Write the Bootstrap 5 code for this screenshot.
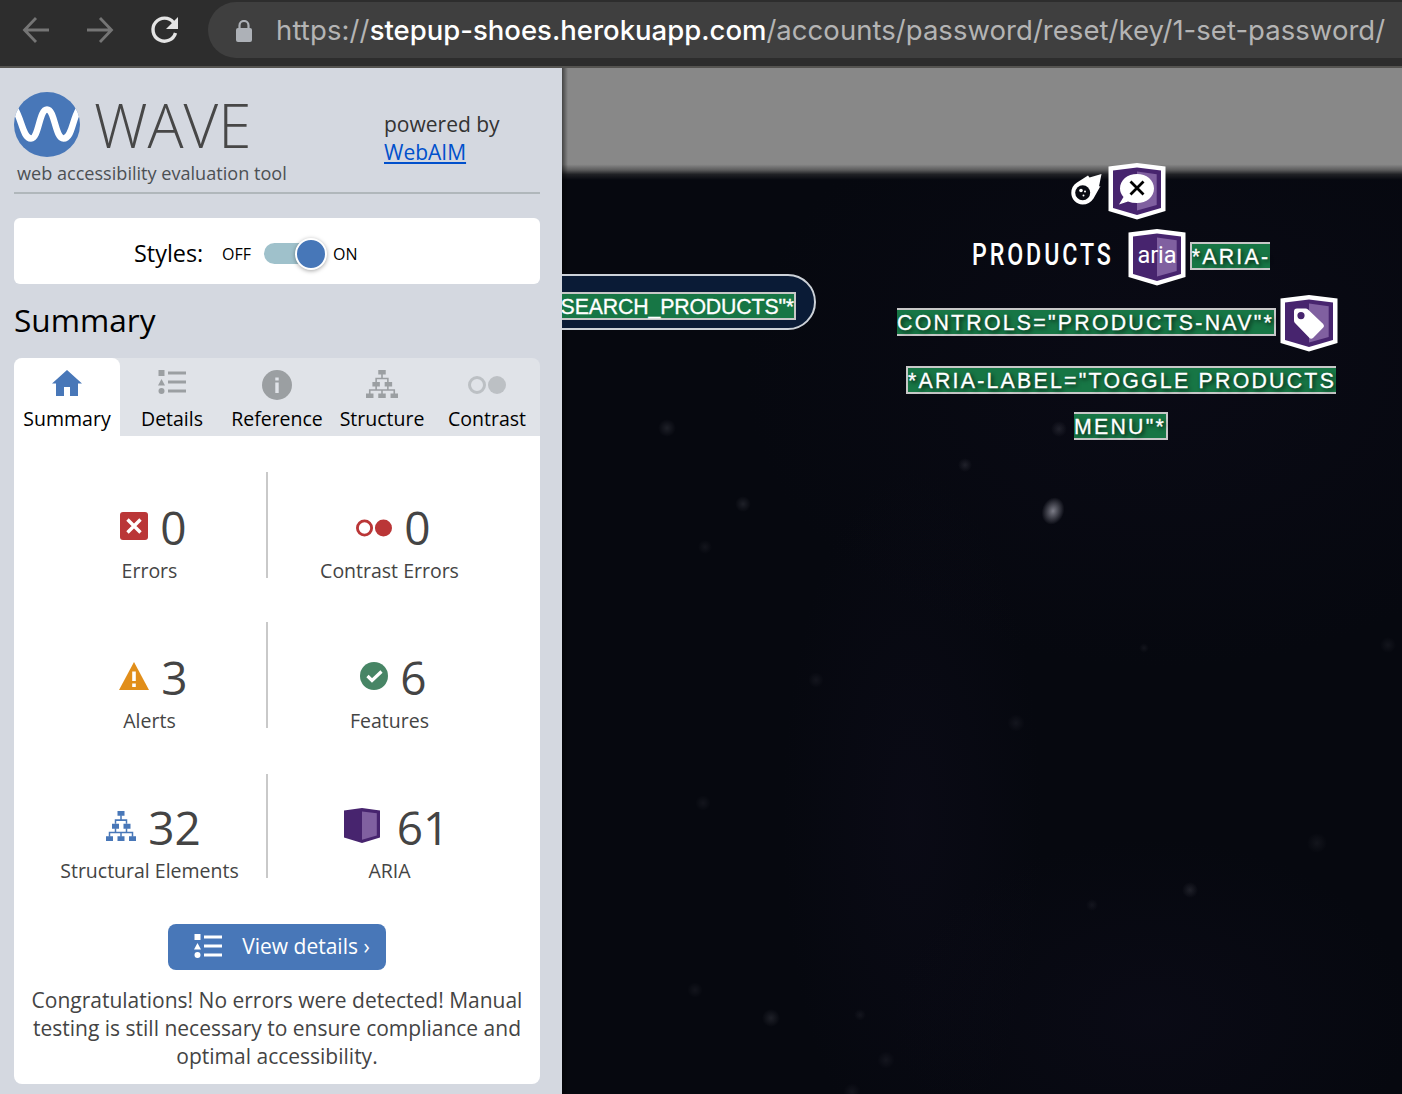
<!DOCTYPE html>
<html lang="en">
<head>
<meta charset="utf-8">
<meta name="viewport" content="width=device-width, initial-scale=1">
<title>WAVE report - StepUp Shoes</title>
<link rel="stylesheet" href="https://cdn.jsdelivr.net/npm/bootstrap@5.3.0/dist/css/bootstrap.min.css">
<style>
body{width:1402px;height:1094px;overflow:hidden;font-family:"Open Sans","Noto Sans",sans-serif;background:#05070f;color:#000}
svg{display:block;flex:none}
.browser-bar{height:68px;background:#2d2d2d;border-bottom:2px solid #555451;padding-top:2px}
.nav-icons{width:208px;padding-left:21px}
.address{height:56px;background:#3f3f3f;border-radius:28px 0 0 28px;padding:1px 0 0 27px;font-family:Inter,Roboto,sans-serif;font-size:27.5px;color:#b4b4b4;white-space:nowrap}
.address .lock{margin-right:23px}
.address .scheme{letter-spacing:.12px}
.address .domain{color:#fff;font-weight:500}
.address .route{letter-spacing:.04px}
.wave-side{width:562px;height:1026px;background:#d4d8e0;padding:0 22px 0 14px;position:relative;z-index:2}
.brand{height:126px;border-bottom:2px solid #b0b7bb}
.brand-word{font-size:60px;font-weight:300;line-height:60px;color:#474747;margin-left:14px;padding-top:1px}
.brand-sub{font-size:18.1px;line-height:24px;color:#4c5054;white-space:nowrap;margin-top:4px;padding-left:3px}
.powered{width:156px;font-size:21px;line-height:28px;color:#333;padding-top:42px}
.powered a{color:#0050cc}
.styles-box{height:66px;margin-top:24px;padding-top:5px;border-radius:6px;background:#fff}
.styles-label{font-size:23.4px;margin-left:120px;width:88px}
.styles-box .opt{font-size:16px}
.opt-off{width:42px}
.opt-on{margin-left:11px}
.knob-track{width:58px;height:21px;border-radius:11px;background:#9fc1cb}
.knob{width:32px;height:32px;border-radius:50%;background:#4777b8;border:2px solid #fff;box-shadow:0 1px 4px rgba(0,0,0,.35);margin-right:-5px}
.side-title{font-size:31.6px;line-height:40px;height:74px;padding:16px 0 0;margin:0;font-weight:400}
.wave-tabs{height:78px;background:#e0e3e8;border-radius:8px 8px 0 0}
.wave-tabs .tab-item{width:105px;font-size:19.5px;border-radius:8px 8px 0 0;padding-top:12px;padding-right:1px;color:#000;text-decoration:none}
.wave-tabs .tab-item.current{background:#fff;width:106px;padding-right:0}
.tab-pic{height:33px}
.tab-pic.low{padding-top:6px}
.tab-item span{line-height:32px}
.panel{height:648px;background:#fff;border-radius:0 0 8px 8px;padding-top:36px;color:#444}
.stat-row{height:106px;margin:0 30px 44px 18px}
.stat-cell{width:234px;padding-left:1px}
.stat-cell.end{width:242px}
.rule{width:2px;background:#c9c9c9}
.rule.short{margin-top:2px}
.figure-line{height:52px;margin:28px 0 4px 8px;gap:12px}
.figure-line b{font-weight:400;font-size:46px;line-height:52px;padding-top:1px}
.aria-figure{gap:17px;margin-left:14px}
.stat-cell small{font-size:19.5px;line-height:30px;color:#444}
.btn-view{width:218px;height:46px;border-radius:8px;background:#4877b8;color:#fff;font-size:21px;padding:0 0 1px;margin:2px auto 0}
.view-text{margin-left:20px;margin-right:-10px}
.verdict{font-size:21px;line-height:28px;margin:16px 10px 0;text-align:center;color:#444}
.site{height:1026px;position:relative;background:#06080f}
.sky{position:absolute;inset:0}
.site-body{position:relative}
.search-pill{width:282px;height:56px;margin:206px 0 0 -28px;border:2px solid #ccd1d8;border-radius:28px;background:#0a1b36;padding:8px 18px 0 0}
.attr{height:28px;border:2px solid #c8c8c8;background:#177645;color:#fff;font-family:"Liberation Sans",Arial,sans-serif;font-size:21.3px;line-height:27px;letter-spacing:-.15px;white-space:nowrap;-webkit-text-stroke:.3px #fff}
.site-nav{width:482px;margin-left:64px;padding-top:95px}
.site-nav .attr{letter-spacing:2.25px;text-shadow:2px 2px 4px rgba(0,0,0,.8)}
.attr.open-r{border-right:0}.attr.open-l{border-left:0}
.nav-word{font-family:Roboto,sans-serif;font-weight:500;font-size:32px;line-height:38px;color:#fff;letter-spacing:4px;width:156px;margin-bottom:7px}
.nav-word span{display:inline-block;transform:scaleX(.725);transform-origin:0 50%;white-space:nowrap}
.line-b,.line-c{margin-top:9px}
.line-c{margin-right:7px}
.line-b .attr,.line-c .attr{margin-bottom:3px}
.comet{margin:-4px 6px 0 -5px}
.line-d{margin-top:14px}
.line-e{margin-top:18px}
</style>
<script src="https://cdn.jsdelivr.net/npm/bootstrap@5.3.0/dist/js/bootstrap.bundle.min.js"></script>
</head>
<body>
<svg width="0" height="0" class="position-absolute">
  <defs>
    <symbol id="i-tree" viewBox="0 0 30 28" preserveAspectRatio="none"><path fill="currentColor" d="M11.500 0h7v4.500h-7zM6 12h7v4.500H6zM17.500 12h7v4.500h-7zM0 23.500h7V28H0zM11.500 23.500h7V28h-7zM23 23.500h7V28h-7z"/><path d="M15 4v4.500M9.500 12V8.500h11V12M9.500 16v4M20.500 16v4M3.500 24v-4h23v4M15 20v4" fill="none" stroke="currentColor" stroke-width="1.500"/></symbol>
    <symbol id="i-list" viewBox="0 0 28 25"><path fill="currentColor" d="M.5 0h6v6h-6zM0 15.500 3.500 9 7 15.500zM10 1.500h18v3H10zM10 10.500h18v3H10zM10 19.500h18v3H10z"/><circle cx="3.500" cy="21" r="3" fill="currentColor"/></symbol>
    <symbol id="i-pair" viewBox="0 0 38 18"><circle cx="9" cy="9" r="7.500" fill="none" stroke="currentColor" stroke-width="3"/><circle cx="29" cy="9" r="9" fill="currentColor"/></symbol>
    <symbol id="i-badge" viewBox="0 0 58 57"><path fill="#fff" d="M29 0 57.500 3.500V48L29 56.500 .5 48V3.500z"/><path fill="#47246e" d="M29 4.500 53 7.500V45L29 52 5 45V7.500z"/><path fill="#8060a0" d="M29 8.500 48.700 11.200V42L29 47.500z"/></symbol>
  </defs>
</svg>

<header class="browser-bar d-flex align-items-start">
  <div class="nav-icons d-flex">
    <svg width="160" height="56" viewBox="0 0 160 56" fill="none" stroke="#757575" stroke-width="2.800"><path d="M28 28H4M15 16 3.500 28 15 40M66 28h24M79 16l11.500 12L79 40"/><path stroke="#e4e4e4" stroke-width="3.400" d="M152.500 20.500A11.500 11.500 0 1 0 154.500 31"/><path fill="#e4e4e4" stroke="none" d="M157 15v12h-12z"/></svg>
  </div>
  <div class="address flex-grow-1 d-flex align-items-center">
    <svg width="18" height="22" viewBox="0 0 18 22" class="lock"><rect x="1" y="8" width="16" height="14" rx="2" fill="#adb1b7"/><path d="M4.500 9V5.500a4.500 4.500 0 0 1 9 0V9" fill="none" stroke="#adb1b7" stroke-width="2.200"/></svg>
    <div><span class="scheme">https://</span><span class="domain">stepup-shoes.herokuapp.com</span><span class="route">/accounts/password/reset/key/1-set-password/</span></div>
  </div>
</header>

<div class="d-flex">
<aside class="wave-side flex-shrink-0">
  <div class="brand d-flex justify-content-between">
    <div class="pt-4">
      <div class="d-flex align-items-center">
        <svg width="66" height="65" viewBox="0 0 66 65"><defs><clipPath id="disc"><ellipse cx="33" cy="32.500" rx="33" ry="32.500"/></clipPath></defs><ellipse cx="33" cy="32.500" rx="33" ry="32.500" fill="#4877b8"/><path clip-path="url(#disc)" d="M1 17C8 28 9 46.500 17 46.500S25 17.500 33 17.500 41 46.500 49.500 46.500 58 28 65 17" fill="none" stroke="#fff" stroke-width="6.500"/></svg>
        <div class="brand-word">WAVE</div>
      </div>
      <div class="brand-sub">web accessibility evaluation tool</div>
    </div>
    <div class="powered"><div>powered by</div><a href="#">WebAIM</a></div>
  </div>

  <div class="styles-box d-flex align-items-center">
    <span class="styles-label">Styles:</span>
    <span class="opt opt-off">OFF</span>
    <div class="knob-track d-flex align-items-center justify-content-end"><div class="knob"></div></div>
    <span class="opt opt-on">ON</span>
  </div>

  <h1 class="side-title">Summary</h1>

  <nav class="wave-tabs d-flex">
    <a class="tab-item current d-flex flex-column align-items-center" href="#"><div class="tab-pic"><svg width="30" height="26" viewBox="0 0 30 26" fill="#4877b8"><path d="M15 0 30 13.500H26V26H18V17H12V26H4V13.500H0z"/></svg></div><span>Summary</span></a>
    <a class="tab-item d-flex flex-column align-items-center" href="#"><div class="tab-pic"><svg width="28" height="25" color="#9b9fa2"><use href="#i-list"/></svg></div><span>Details</span></a>
    <a class="tab-item d-flex flex-column align-items-center" href="#"><div class="tab-pic"><svg width="30" height="30" viewBox="0 0 30 30"><circle cx="15" cy="15" r="15" fill="#9b9fa2"/><path fill="#e0e3e8" d="M13.300 7.500h3.400v3h-3.400zM13.300 12.500h3.400V23h-3.400z"/></svg></div><span>Reference</span></a>
    <a class="tab-item d-flex flex-column align-items-center" href="#"><div class="tab-pic"><svg width="32" height="28" color="#9b9fa2"><use href="#i-tree"/></svg></div><span>Structure</span></a>
    <a class="tab-item d-flex flex-column align-items-center" href="#"><div class="tab-pic low"><svg width="38" height="18" color="#bcc0c4"><use href="#i-pair"/></svg></div><span>Contrast</span></a>
  </nav>

  <div class="panel d-flex flex-column">
    <div class="stat-row d-flex">
      <div class="stat-cell text-center">
        <div class="figure-line d-flex align-items-center justify-content-center"><svg width="28" height="28" viewBox="0 0 28 28"><rect width="28" height="28" rx="3" fill="#ba3637"/><path d="M7.500 7.500 20.500 20.500M20.500 7.500 7.500 20.500" stroke="#fff" stroke-width="3.400"/></svg><b>0</b></div><small>Errors</small>
      </div>
      <div class="rule"></div>
      <div class="stat-cell end text-center">
        <div class="figure-line d-flex align-items-center justify-content-center"><svg width="36" height="18" color="#ba3637" class="mt-1"><use href="#i-pair"/></svg><b>0</b></div><small>Contrast Errors</small>
      </div>
    </div>
    <div class="stat-row d-flex">
      <div class="stat-cell text-center">
        <div class="figure-line d-flex align-items-center justify-content-center"><svg width="30" height="28" viewBox="0 0 30 28"><path d="M15 0 30 28H0z" fill="#e18e1a"/><path d="M13.200 9.500h3.600v9.500h-3.600zM13.200 21.500h3.600v3.500h-3.600z" fill="#fff"/></svg><b>3</b></div><small>Alerts</small>
      </div>
      <div class="rule"></div>
      <div class="stat-cell end text-center">
        <div class="figure-line d-flex align-items-center justify-content-center"><svg width="28" height="28" viewBox="0 0 28 28"><circle cx="14" cy="14" r="14" fill="#478565"/><path d="M7.500 14 12 18.500 21.500 9.500" fill="none" stroke="#fff" stroke-width="3.200"/></svg><b>6</b></div><small>Features</small>
      </div>
    </div>
    <div class="stat-row d-flex">
      <div class="stat-cell text-center">
        <div class="figure-line d-flex align-items-center justify-content-center"><svg width="30" height="30" color="#4877b8"><use href="#i-tree"/></svg><b>32</b></div><small>Structural Elements</small>
      </div>
      <div class="rule short"></div>
      <div class="stat-cell end text-center">
        <div class="figure-line aria-figure d-flex align-items-center justify-content-center"><svg width="36" height="36" viewBox="0 0 36 36"><path fill="#47246e" d="M18 0 36 2.500V29.500L18 35 0 29.500V2.500z"/><path fill="#8060a0" d="M18 3.500 32.800 5.200V27.500L18 31.700z"/></svg><b>61</b></div><small>ARIA</small>
      </div>
    </div>
    <button class="btn btn-view d-flex align-items-center justify-content-center" type="button"><svg width="28" height="25" color="#fff"><use href="#i-list"/></svg><span class="view-text">View details ›</span></button>
    <p class="verdict">Congratulations! No errors were detected! Manual testing is still necessary to ensure compliance and optimal accessibility.</p>
  </div>
</aside>

<main class="site flex-grow-1">
  <svg class="sky" width="840" height="1026" viewBox="0 0 840 1026">
    <defs>
      <linearGradient id="fade" x1="0" y1="0" x2="0" y2="1"><stop offset="0" stop-color="#888"/><stop offset=".86" stop-color="#888"/><stop offset=".91" stop-color="#5c5c5d"/><stop offset=".95" stop-color="#202125"/><stop offset="1" stop-color="#06080f"/></linearGradient>
      <linearGradient id="edge"><stop offset="0" stop-color="#000" stop-opacity=".5"/><stop offset="1" stop-color="#000" stop-opacity="0"/></linearGradient>
      <radialGradient id="star"><stop offset="0" stop-color="#a8a8b4"/><stop offset="1" stop-color="#a8a8b4" stop-opacity="0"/></radialGradient>
      <radialGradient id="haze"><stop offset="0" stop-color="#120f22" stop-opacity=".32"/><stop offset="1" stop-color="#120f22" stop-opacity="0"/></radialGradient>
    </defs>
    <ellipse cx="350" cy="750" rx="130" ry="350" fill="url(#haze)"/>
    <ellipse cx="590" cy="950" rx="260" ry="180" fill="url(#haze)"/>
    <ellipse cx="600" cy="300" rx="420" ry="300" fill="url(#haze)"/>
    <rect width="840" height="112" fill="url(#fade)"/>
    <rect width="6" height="1026" fill="url(#edge)"/>
    <g fill="url(#star)">
      <ellipse cx="491" cy="443" rx="11" ry="14" transform="rotate(20 491 443)" opacity=".72"/>
      <g opacity=".15"><circle cx="105" cy="360" r="9"/><circle cx="181" cy="436" r="8"/><circle cx="403" cy="397" r="7"/><circle cx="497" cy="361" r="8"/><circle cx="209" cy="950" r="9"/><circle cx="628" cy="822" r="8"/></g>
      <g opacity=".08"><circle cx="454" cy="655" r="9"/><circle cx="254" cy="612" r="8"/><circle cx="582" cy="580" r="5"/><circle cx="141" cy="735" r="8"/><circle cx="133" cy="922" r="8"/><circle cx="324" cy="992" r="9"/><circle cx="290" cy="1024" r="9"/><circle cx="298" cy="947" r="6"/><circle cx="530" cy="837" r="6"/><circle cx="755" cy="775" r="10"/><circle cx="826" cy="577" r="8"/><circle cx="143" cy="479" r="7"/></g>
    </g>
  </svg>
  <div class="site-body d-flex align-items-start">
    <div class="search-pill d-flex align-items-center justify-content-end flex-shrink-0"><div class="attr">SEARCH_PRODUCTS"*</div></div>
    <nav class="site-nav d-flex flex-column align-items-center flex-shrink-0 text-white">
      <div class="line-a d-flex align-items-center">
        <svg width="31" height="31" viewBox="0 0 31 31" class="comet"><path fill="#fff" d="M30.500 0 28 12.500 29.500 12 22.500 24.500Q18.500 30.500 11.500 30.500A11.500 11.500 0 0 1 .3 19Q.3 12 6 8.500L17 1.500 18.500 3.500z"/><circle cx="11.700" cy="18.700" r="7.500" fill="#080a12"/><g fill="#fff"><circle cx="10" cy="16.500" r="1.800"/><circle cx="14" cy="17.500" r="1"/><circle cx="12.500" cy="21.500" r="1"/></g></svg>
        <svg width="58" height="57" viewBox="0 0 58 57"><use href="#i-badge"/><path fill="#fff" d="M29 11c9.500 0 17 6 17 14.500S38.500 40 29 40q-5 0-9-1.500L11 41.500 15.500 34Q12 30 12 25.500C12 17 19.500 11 29 11z"/><path d="M22.500 18.500 35.500 31.500M35.500 18.500 22.500 31.500" stroke="#000" stroke-width="2.800"/></svg>
      </div>
      <div class="line-b d-flex align-items-center">
        <div class="nav-word"><span>PRODUCTS</span></div>
        <svg width="58" height="57" viewBox="0 0 58 57"><use href="#i-badge"/><text x="29" y="34" text-anchor="middle" font-family="Roboto" font-weight="400" font-size="23.500" fill="#fff">aria</text></svg>
        <div class="attr open-r ms-1">*ARIA-</div>
      </div>
      <div class="line-c d-flex align-items-center">
        <div class="attr open-l">CONTROLS="PRODUCTS-NAV"*</div>
        <svg width="58" height="57" viewBox="0 0 58 57" class="ms-1"><use href="#i-badge"/><path fill="#fff" fill-rule="evenodd" d="M17 13.500H25.500Q27 13.500 28 14.500L43.200 29Q44.800 31 43.300 32.500L33 43Q31 44.500 29.500 43L15 28Q14 27 14 25.500V16.500Q14 13.500 17 13.500zM21 17a3.600 3.600 0 1 0 0 7.200 3.600 3.600 0 0 0 0-7.200z"/></svg>
      </div>
      <div class="attr open-r line-d">*ARIA-LABEL="TOGGLE PRODUCTS</div>
      <div class="attr open-l line-e">MENU"*</div>
    </nav>
  </div>
</main>
</div>
</body>
</html>
